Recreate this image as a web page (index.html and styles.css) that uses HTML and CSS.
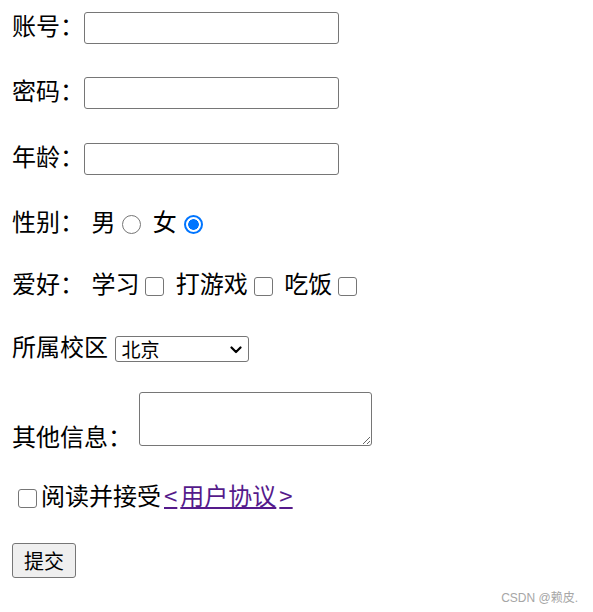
FILE: index.html
```html
<!DOCTYPE html>
<html lang="zh-CN">
<head>
<meta charset="utf-8">
<title>表单</title>
<link rel="stylesheet" href="styles.css">
</head>
<body>
<form class="form">
  <div class="row r1">账号：<input class="text" type="text"></div>
  <div class="row r2">密码：<input class="text" type="password"></div>
  <div class="row r3">年龄：<input class="text" type="text"></div>
  <div class="row r4">性别： 男<input class="radio" type="radio" name="sex"> 女<input class="radio" type="radio" name="sex" checked></div>
  <div class="row r5">爱好： 学习<input class="check" type="checkbox"> 打游戏<input class="check" type="checkbox"> 吃饭<input class="check" type="checkbox"></div>
  <div class="row r6">所属校区 <span class="sel-wrap"><select class="select"><option>北京</option><option>上海</option><option>广州</option></select><svg class="chev" width="12" height="8" viewBox="0 0 12 8"><path d="M1.5 1.5 L6 6 L10.5 1.5" fill="none" stroke="#000" stroke-width="2.2" stroke-linecap="round" stroke-linejoin="round"/></svg></span></div>
  <div class="row r7">其他信息： <textarea class="area"></textarea></div>
  <div class="row r8"><input class="check" type="checkbox">阅读并接受<a class="link" href="#"><span class="ang">&lt;</span>用户协议<span class="ang">&gt;</span></a></div>
  <div class="row r9"><button class="btn" type="submit">提交</button></div>
</form>
<div class="mark">CSDN @赖皮.</div>
</body>
</html>
```

FILE: styles.css
```css
html, body {
  margin: 0;
  padding: 0;
  background: #fff;
}
body {
  padding: 12px;
  font-family: "Noto Sans CJK SC", "Microsoft YaHei", sans-serif;
  font-size: 24px;
  color: #000;
}
.form {
  margin: 0;
}
.row {
  height: 32px;
  line-height: 26px;
  white-space: nowrap;
  word-spacing: 2px;
}
.r1 { margin-bottom: 33px; }
.r2 { margin-bottom: 34px; }
.r3 { margin-bottom: 33px; }
.r4 { height: 28px; margin-bottom: 34px; }
.r5 { height: 28px; margin-bottom: 35px; }
.r6 { height: 28px; margin-bottom: 31px; }
.r7 { height: auto; margin-bottom: 33px; }
.r8 { height: 28px; margin-bottom: 33px; }
.r9 { height: 35px; }

.text {
  box-sizing: border-box;
  width: 255px;
  height: 32px;
  margin: 0;
  padding: 1px 3px;
  border: 1px solid #767676;
  border-radius: 3px;
  font-family: "Noto Sans CJK SC", sans-serif;
  font-size: 20px;
  vertical-align: middle;
  background: #fff;
}
.radio {
  appearance: none;
  -webkit-appearance: none;
  box-sizing: border-box;
  width: 19px;
  height: 19px;
  margin: 0 4px 0 7px;
  border: 1.5px solid #767676;
  border-radius: 50%;
  background: #fff;
  vertical-align: middle;
}
.radio:checked {
  border: 2px solid #0075ff;
  background: radial-gradient(circle, #0075ff 0 5px, #fff 5.6px);
}
.check {
  appearance: none;
  -webkit-appearance: none;
  box-sizing: border-box;
  width: 19px;
  height: 19px;
  margin: 0 4px 0 6px;
  border: 1.5px solid #767676;
  border-radius: 3px;
  background: #fff;
  vertical-align: middle;
}
.sel-wrap {
  position: relative;
  display: inline-block;
  vertical-align: middle;
  line-height: 0;
}
.select {
  appearance: none;
  -webkit-appearance: none;
  box-sizing: border-box;
  width: 134px;
  height: 26px;
  margin: 0;
  padding: 0 0 0 5px;
  border: 1px solid #767676;
  border-radius: 3px;
  font-family: "Noto Sans CJK SC", sans-serif;
  font-size: 19px;
  line-height: 24px;
  color: #000;
  background: #fff;
}
.chev {
  position: absolute;
  right: 7px;
  top: 10px;
  pointer-events: none;
}
.area {
  box-sizing: border-box;
  width: 233px;
  height: 54px;
  margin: 0;
  padding: 3px;
  border: 1px solid #767676;
  border-radius: 3px;
  font-family: "Noto Sans CJK SC", sans-serif;
  font-size: 20px;
  vertical-align: baseline;
}
.link {
  color: #551a8b;
  text-decoration: underline;
}
.ang {
  padding: 0 3px;
}
.btn {
  box-sizing: border-box;
  width: 64px;
  height: 35px;
  margin: 0;
  padding: 0;
  border: 1px solid #767676;
  border-radius: 3px;
  background: #efefef;
  font-family: "Noto Sans CJK SC", sans-serif;
  font-size: 20px;
  color: #000;
  line-height: 31px;
}
.mark {
  position: absolute;
  right: 15px;
  top: 588px;
  font-family: "Liberation Sans", "Noto Sans CJK SC", sans-serif;
  font-size: 12px;
  color: #a6a6a6;
}
```
